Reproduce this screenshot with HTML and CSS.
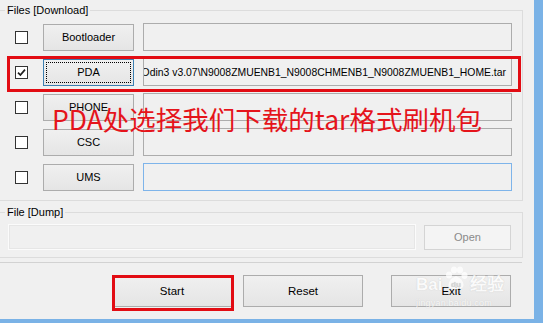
FILE: index.html
```html
<!DOCTYPE html>
<html lang="zh-CN">
<head>
  <meta charset="UTF-8" />
  <meta name="viewport" content="width=device-width, initial-scale=1.0" />
  <title>Odin3 v3.07</title>
  <link rel="stylesheet" href="styles.css">
</head>
<body>
  <div class="window">
    <fieldset class="group files">
      <legend>Files [Download]</legend>
      <div class="rows">
        <div class="row">
          <span class="check"></span>
          <button class="btn slot">Bootloader</button>
          <div class="path"></div>
        </div>
        <div class="row marked">
          <span class="check">
            <svg width="11" height="11" viewBox="0 0 11 11"><path d="M2 5.6 L4.4 8 L9 2.6" fill="none" stroke="#1e1e1e" stroke-width="1.7"/></svg>
          </span>
          <button class="btn slot focus">PDA</button>
          <div class="path"><span>Odin3 v3.07\N9008ZMUENB1_N9008CHMENB1_N9008ZMUENB1_HOME.tar</span></div>
        </div>
        <div class="row">
          <span class="check"></span>
          <button class="btn slot">PHONE</button>
          <div class="path"></div>
        </div>
        <div class="row">
          <span class="check"></span>
          <button class="btn slot">CSC</button>
          <div class="path"></div>
        </div>
        <div class="row">
          <span class="check"></span>
          <button class="btn slot">UMS</button>
          <div class="path hover"></div>
        </div>
      </div>
    </fieldset>

    <fieldset class="group dump">
      <legend>File [Dump]</legend>
      <div class="dump-row">
        <div class="path disabled"></div>
        <button class="btn open" disabled>Open</button>
      </div>
    </fieldset>

    <div class="actions">
      <button class="btn big start">Start</button>
      <button class="btn big">Reset</button>
      <button class="btn big exit">Exit</button>
    </div>

    <!-- annotation layers from the tutorial screenshot -->
    <div class="note">PDA处选择我们下载的tar格式刷机包</div>
    <div class="watermark">
      <div class="wm-logo">Bai<span class="paw">
        <svg width="26" height="24" viewBox="0 0 26 24"><g fill="#fff"><ellipse cx="6" cy="9" rx="3" ry="3.6"/><ellipse cx="11" cy="4" rx="3" ry="3.6"/><ellipse cx="17" cy="4" rx="3" ry="3.6"/><ellipse cx="21.5" cy="9.5" rx="3" ry="3.6"/><path d="M13 10 C8 12 4 17 6 21 C8 24 18 24 20 21 C22 17 18 12 13 10 Z"/></g><text x="13" y="20.5" font-size="8" font-weight="bold" text-anchor="middle" fill="#d0d0d0" font-family="Liberation Sans, sans-serif">du</text></svg>
      </span>经验</div>
      <div class="wm-url">jingyan.baidu.com</div>
    </div>
  </div>
</body>
</html>
```

FILE: styles.css
```css
body { margin: 0; background: #7ab2e6; font-family: "Liberation Sans", Arial, sans-serif; font-size: 11px; color: #000; }
.window { position: relative; width: 534px; height: 319px; padding-top: 3px; box-sizing: border-box; background: #f0f0f0; overflow: hidden; }

.group { margin: 0; padding: 6px 0 9px 0; width: 523px; box-sizing: border-box; min-width: 0; border: 1px solid #dcdcdc; border-left: none; }
.group legend { margin-left: 5px; padding: 0 2px; line-height: 14px; font-size: 11px; color: #000; }
.dump { margin-top: 4px; padding: 5px 0 7px 0; }

.rows { display: flex; flex-direction: column; gap: 7px; }
.row { position: relative; display: flex; align-items: center; height: 28px; padding-left: 15px; }
.row.marked::after { content: ""; position: absolute; left: 7px; top: -2px; width: 514px; height: 36px; box-sizing: border-box; border: 3px solid #e20c13; }

.check { display: flex; align-items: center; justify-content: center; width: 13px; height: 13px; box-sizing: border-box; border: 1px solid #333; background: #fff; }

.btn { font-family: inherit; font-size: 11px; color: #000; padding: 0; border: 1px solid #acacac; background: linear-gradient(#f0f0f0, #e5e5e5); }
.slot { margin-left: 15px; width: 91px; height: 27px; }
.slot.focus { border-color: #3c7fb1; outline: 1px dotted #000; outline-offset: -4px; }

.path { display: flex; justify-content: flex-end; align-items: center; overflow: hidden; white-space: nowrap; margin-left: 9px; width: 369px; height: 28px; box-sizing: border-box; padding: 0 5px; border: 1px solid #acacac; background: #f0f0f0; font-size: 10.4px; }
.path.hover { border-color: #7eb4ea; }

.dump-row { display: flex; align-items: center; height: 26px; padding-left: 8px; }
.path.disabled { margin-left: 0; width: 408px; height: 26px; border-color: #fbfbfb; box-shadow: inset 0 0 0 1px #e6e6e6; }
.open { margin-left: 8px; width: 87px; height: 25px; color: #8a8a8a; border-color: #d4d4d4; background: #f4f4f4; }

.actions { display: flex; gap: 11px; margin-top: 4px; padding: 12px 0 0 112px; border-top: 1px solid #d2d2d2; width: 410px; }
.big { width: 120px; height: 32px; font-size: 11.5px; }
.start { position: relative; }
.start::after { content: ""; position: absolute; left: -1px; top: -1px; width: 122px; height: 36px; box-sizing: border-box; border: 3px solid #e20c13; }
.exit { margin-left: 17px; }

.note { position: absolute; left: 52px; top: 104px; font-family: "Noto Sans CJK SC", "Noto Sans", sans-serif; font-size: 26.5px; line-height: 30px; color: #e5141b; white-space: nowrap; }

.watermark { position: absolute; left: 416px; top: 266px; color: #fff; opacity: 0.75; text-shadow: 0 0 1px #b8b8b8; }
.wm-logo { display: flex; align-items: flex-end; font-family: "Liberation Sans", sans-serif; font-weight: bold; font-size: 17px; line-height: 20px; }
.wm-logo .paw { margin: 0 1px; }
.wm-url { font-size: 9px; line-height: 10px; margin-top: 3px; letter-spacing: 0.2px; }
```
